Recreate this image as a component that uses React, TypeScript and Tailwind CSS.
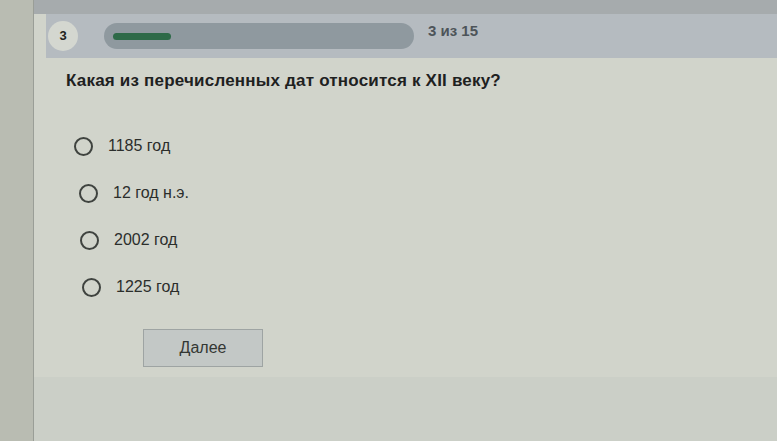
const options = ["1185 год", "12 год н.э.", "2002 год", "1225 год"];

function Radio() {
  return (
    <span className="block w-[19px] h-[19px] rounded-full border-2 border-[#3f433f] shrink-0" />
  );
}

export default function App() {
  return (
    <div className="flex w-[777px] h-[441px] overflow-hidden bg-[#b8bbb1] font-['Liberation_Sans',Arial,sans-serif]">
      <div className="w-[33px] shrink-0 bg-[#b9bcb2]" />
      <div className="flex flex-col flex-1 border-l border-[#9a9e97] bg-[#d1d4cb]">
        <div className="h-[14px] bg-[#a6abad]" />

        <div className="flex items-center h-[44px] ml-3 bg-[#b5bbc0]">
          <div className="flex items-center justify-center w-[30px] h-[30px] ml-[2px] rounded-full bg-[#d4d7d0] text-[13px] font-bold text-[#1f2320]">
            3
          </div>
          <div className="flex items-center w-[310px] h-[26px] ml-[26px] rounded-full bg-[#8f999f] px-[9px]">
            <div className="w-[58px] h-[7px] rounded-full bg-[#2e6a48]" />
          </div>
          <span className="ml-[14px] -mt-[10px] text-[15px] font-bold text-[#4d5459]">
            3 из 15
          </span>
        </div>

        <div className="flex flex-col flex-1 bg-[#d1d4cb]">
          <p className="mt-[10px] ml-[32px] text-[17px] font-bold tracking-[0.2px] text-[#1e211f]">
            Какая из перечисленных дат относится к XII веку?
          </p>

          <ul className="flex flex-col gap-[28px] mt-[43px] ml-[40px]">
            {options.map((o, i) => (
              <li key={o} className="flex items-center h-[19px]" style={{ marginLeft: [0, 5, 6, 8][i] }}>
                <Radio />
                <span className="ml-[15px] text-[16px] text-[#2b2e2b]">{o}</span>
              </li>
            ))}
          </ul>

          <button className="mt-[32px] ml-[109px] w-[120px] h-[38px] border border-[#9ea4a3] bg-[#c3c8c6] text-[16px] text-[#333733]">
            Далее
          </button>

          <div className="flex-1 mt-[10px] bg-[#cbcfc7]" />
        </div>
      </div>
    </div>
  );
}
